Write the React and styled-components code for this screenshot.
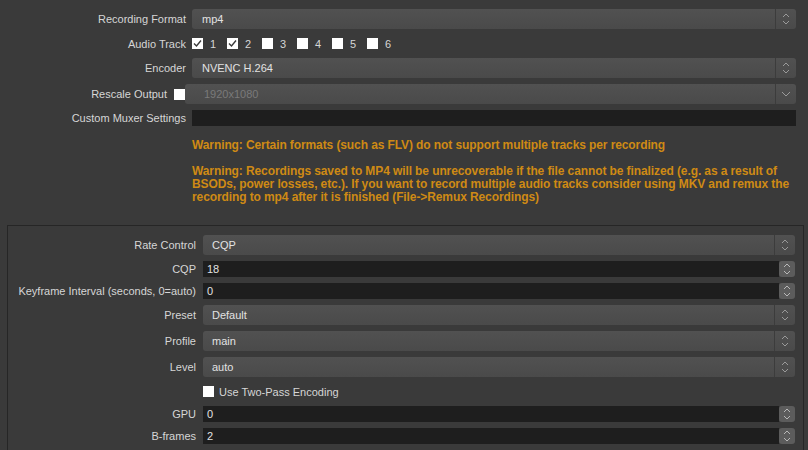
import styled, { createGlobalStyle } from 'styled-components';

const GlobalStyle = createGlobalStyle`
  html, body {
    margin: 0;
    padding: 0;
    background: #3a3a3a;
  }
  body {
    font-family: "Liberation Sans", Arial, sans-serif;
    font-size: 11px;
    color: #d8d8d8;
    overflow: hidden;
  }
`;

const Page = styled.div`
  width: 808px;
  height: 450px;
  background: #3a3a3a;
  position: relative;
  overflow: hidden;
  padding-top: 9px;
  box-sizing: border-box;
`;

const Form = styled.div`
  display: grid;
  grid-template-columns: ${(p) => p.$label}px 1fr;
  column-gap: ${(p) => p.$gap}px;
  row-gap: 6px;
  align-items: center;
`;

const Label = styled.div`
  text-align: right;
  white-space: nowrap;
  color: #d6d6d6;
`;

const Combo = styled.div`
  height: 20px;
  border-radius: 3px;
  background: linear-gradient(#515151, #4a4a4a);
  display: flex;
  align-items: center;
  color: ${(p) => (p.$disabled ? '#7a7a7a' : '#e2e2e2')};
  padding-left: ${(p) => p.$pad || 10}px;
  box-sizing: border-box;
  flex: 1;
`;

const ComboText = styled.span`
  flex: 1;
`;

const ArrowBox = styled.div`
  width: 20px;
  height: 20px;
  border-left: 1px solid #3c3c3c;
  display: flex;
  align-items: center;
  justify-content: center;
`;

const TextInput = styled.div`
  height: 16px;
  background: #1e1e1e;
  display: flex;
  align-items: center;
  padding-left: 4px;
  color: #e2e2e2;
`;

const SpinWrap = styled.div`
  display: flex;
  align-items: center;
  height: 16px;
`;

const SpinField = styled.div`
  flex: 1;
  height: 16px;
  background: #1e1e1e;
  display: flex;
  align-items: center;
  padding-left: 4px;
  color: #e2e2e2;
`;

const SpinButton = styled.div`
  width: 16px;
  height: 16px;
  border-radius: 3px;
  background: #5c5c5c;
  display: flex;
  align-items: center;
  justify-content: center;
`;

const CheckRow = styled.div`
  display: flex;
  align-items: center;
  height: 17px;
`;

const CheckItem = styled.label`
  display: flex;
  align-items: center;
  gap: ${(p) => p.$gap || 7}px;
  width: ${(p) => (p.$auto ? 'auto' : '35px')};
  color: #d6d6d6;
`;

const Box = styled.span`
  width: 11px;
  height: 11px;
  background: #ffffff;
  display: inline-flex;
  align-items: center;
  justify-content: center;
  flex: none;
`;

const RescaleRow = styled.div`
  grid-column: 1 / -1;
  display: flex;
  align-items: center;
`;

const RescaleLabel = styled.div`
  width: 167px;
  text-align: right;
  color: #d6d6d6;
  margin-right: 7px;
`;

const Warnings = styled.div`
  margin: 13px 0 0 192px;
  color: #cf8a14;
  font-weight: bold;
  font-size: 12px;
  line-height: 13px;
  letter-spacing: -0.1px;
  white-space: nowrap;
`;

const Para = styled.p`
  margin: 0 0 ${(p) => p.$after || 0}px 0;
`;

const Group = styled.div`
  position: absolute;
  left: 7px;
  top: 225px;
  width: 797px;
  height: 240px;
  border: 1px solid #262626;
  box-sizing: border-box;
  padding: 9px 8px 0 0;
`;

const TopForm = styled(Form)`
  padding-right: 12px;
`;

function UpDown({ light }) {
  return (
    <svg width="8" height="14" viewBox="0 0 8 14">
      <path d="M1 5 L4 2 L7 5" fill="none" stroke={light ? '#b8b8b8' : '#9a9a9a'} strokeWidth="1" />
      <path d="M1 9 L4 12 L7 9" fill="none" stroke={light ? '#b8b8b8' : '#9a9a9a'} strokeWidth="1" />
    </svg>
  );
}

function Down() {
  return (
    <svg width="10" height="8" viewBox="0 0 10 8">
      <path d="M1 2 L5 6 L9 2" fill="none" stroke="#9a9a9a" strokeWidth="1" />
    </svg>
  );
}

function Check() {
  return (
    <svg width="9" height="9" viewBox="0 0 9 9">
      <path d="M1 4.5 L3.5 7 L8 1.5" fill="none" stroke="#3a3a3a" strokeWidth="1.4" />
    </svg>
  );
}

function Select({ value, single, disabled, pad }) {
  return (
    <Combo $disabled={disabled} $pad={pad}>
      <ComboText>{value}</ComboText>
      <ArrowBox>{single ? <Down /> : <UpDown />}</ArrowBox>
    </Combo>
  );
}

function Spin({ value }) {
  return (
    <SpinWrap>
      <SpinField>{value}</SpinField>
      <SpinButton>
        <UpDown light />
      </SpinButton>
    </SpinWrap>
  );
}

const tracks = [
  { n: 1, on: true },
  { n: 2, on: true },
  { n: 3, on: false },
  { n: 4, on: false },
  { n: 5, on: false },
  { n: 6, on: false },
];

export default function App() {
  return (
    <>
      <GlobalStyle />
      <Page>
        <TopForm $label={186} $gap={6}>
          <Label>Recording Format</Label>
          <Select value="mp4" />

          <Label>Audio Track</Label>
          <CheckRow>
            {tracks.map((t) => (
              <CheckItem key={t.n}>
                <Box>{t.on && <Check />}</Box>
                {t.n}
              </CheckItem>
            ))}
          </CheckRow>

          <Label>Encoder</Label>
          <Select value="NVENC H.264" />

          <RescaleRow>
            <RescaleLabel>Rescale Output</RescaleLabel>
            <Box />
            <Select value="1920x1080" single disabled pad={19} />
          </RescaleRow>

          <Label>Custom Muxer Settings</Label>
          <TextInput />
        </TopForm>

        <Warnings>
          <Para $after={13}>
            Warning: Certain formats (such as FLV) do not support multiple tracks per recording
          </Para>
          <Para>
            Warning: Recordings saved to MP4 will be unrecoverable if the file cannot be finalized (e.g. as a result of
            <br />
            BSODs, power losses, etc.). If you want to record multiple audio tracks consider using MKV and remux the
            <br />
            recording to mp4 after it is finished (File-&gt;Remux Recordings)
          </Para>
        </Warnings>

        <Group>
          <Form $label={188} $gap={7}>
            <Label>Rate Control</Label>
            <Select value="CQP" pad={9} />

            <Label>CQP</Label>
            <Spin value="18" />

            <Label>Keyframe Interval (seconds, 0=auto)</Label>
            <Spin value="0" />

            <Label>Preset</Label>
            <Select value="Default" pad={9} />

            <Label>Profile</Label>
            <Select value="main" pad={9} />

            <Label>Level</Label>
            <Select value="auto" pad={9} />

            <div />
            <CheckRow>
              <CheckItem $auto $gap={5}>
                <Box />
                Use Two-Pass Encoding
              </CheckItem>
            </CheckRow>

            <Label>GPU</Label>
            <Spin value="0" />

            <Label>B-frames</Label>
            <Spin value="2" />
          </Form>
        </Group>
      </Page>
    </>
  );
}
